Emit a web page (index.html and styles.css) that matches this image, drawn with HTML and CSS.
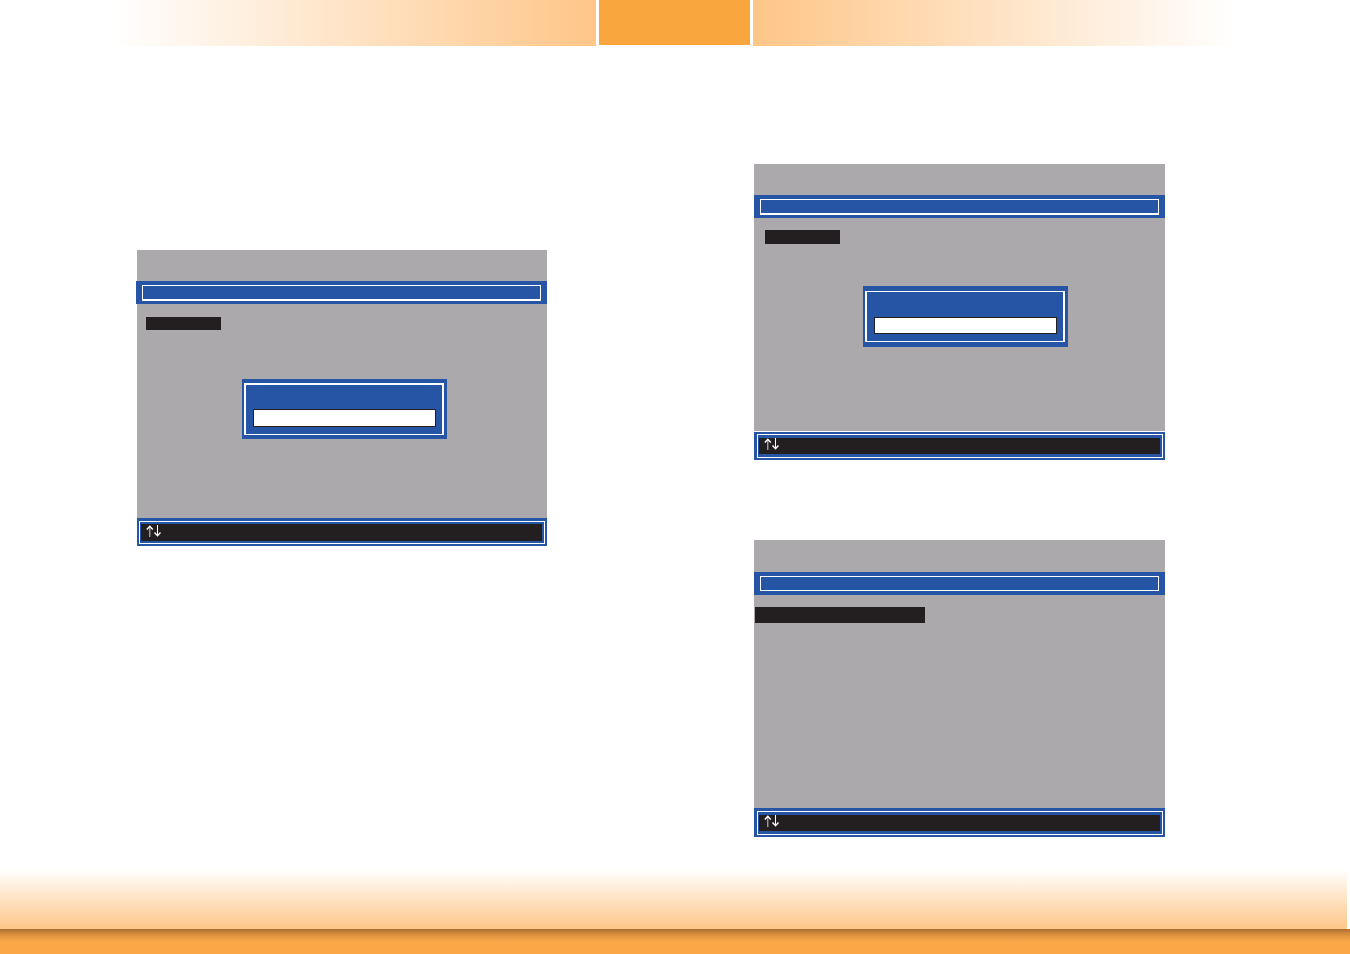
FILE: index.html
```html
<!DOCTYPE html>
<html lang="en">

<head>
  <meta charset="UTF-8">
  <meta name="viewport" content="width=device-width, initial-scale=1.0">
  <title>Setup</title>
  <link rel="stylesheet" href="styles.css">
</head>

<body>
  <header class="page-header">
    <div class="fade fade-left"></div>
    <div class="chapter-tab"></div>
    <div class="fade fade-right"></div>
  </header>

  <main class="content">
    <div class="column column-left">
      <section class="screen screen-wide-bar">
        <div class="screen-top"></div>
        <div class="title-bar">
          <div class="title-frame"></div>
        </div>
        <div class="screen-body">
          <div class="selected"></div>
          <div class="dialog">
            <div class="dialog-frame">
              <input class="dialog-input" type="text" aria-label="Value">
            </div>
          </div>
        </div>
        <div class="key-bar">
          <div class="key-frame">
            <div class="keys">
              <svg class="arrows" viewBox="0 0 15 12" role="img" aria-label="↑↓">
                <path class="shaft" d="M3.8 1V12" />
                <path d="M11.5 0V11" />
                <path class="head" d="M.8 4.5 3.8 1.2 6.8 4.5M8.5 7.5 11.5 10.8 14.5 7.5" />
              </svg>
            </div>
          </div>
        </div>
      </section>
    </div>

    <div class="column column-right">
      <section class="screen">
        <div class="screen-top"></div>
        <div class="title-bar">
          <div class="title-frame"></div>
        </div>
        <div class="screen-body body-ruled">
          <div class="selected selected-inset"></div>
          <div class="dialog dialog-right">
            <div class="dialog-frame">
              <input class="dialog-input" type="text" aria-label="Value">
            </div>
          </div>
        </div>
        <div class="key-bar">
          <div class="key-frame">
            <div class="keys">
              <svg class="arrows" viewBox="0 0 15 12" role="img" aria-label="↑↓">
                <path class="shaft" d="M3.8 1V12" />
                <path d="M11.5 0V11" />
                <path class="head" d="M.8 4.5 3.8 1.2 6.8 4.5M8.5 7.5 11.5 10.8 14.5 7.5" />
              </svg>
            </div>
          </div>
        </div>
      </section>

      <section class="screen">
        <div class="screen-top screen-top-tall"></div>
        <div class="title-bar">
          <div class="title-frame title-frame-thin"></div>
        </div>
        <div class="screen-body">
          <div class="selected selected-long"></div>
        </div>
        <div class="key-bar key-bar-tall">
          <div class="key-frame">
            <div class="keys">
              <svg class="arrows" viewBox="0 0 15 12" role="img" aria-label="↑↓">
                <path class="shaft" d="M3.8 1V12" />
                <path d="M11.5 0V11" />
                <path class="head" d="M.8 4.5 3.8 1.2 6.8 4.5M8.5 7.5 11.5 10.8 14.5 7.5" />
              </svg>
            </div>
          </div>
        </div>
      </section>
    </div>
  </main>

  <footer class="page-footer">
    <div class="footer-fade"></div>
    <div class="footer-bar"></div>
  </footer>
</body>

</html>
```
FILE: styles.css
```css
* {
  box-sizing: border-box;
}

body {
  font-family: "Liberation Serif", serif;
  background-color: #ffffff;
  margin: 0;
  min-height: 100vh;
  display: flex;
  flex-direction: column;
}

/* header */
.page-header {
  display: grid;
  grid-template-columns: 1fr 151px 1fr;
  gap: 3px;
  padding-right: 1px;
}

.fade {
  height: 46px;
}

.fade-left {
  background: linear-gradient(to left, #fec688, #ffffff 81%);
}

.fade-right {
  background: linear-gradient(to right, #fec688, #ffffff 81%);
}

.chapter-tab {
  height: 45px;
  background-color: #f9a63f;
}

/* screens */
.content {
  display: grid;
  grid-template-columns: 1fr 1fr;
  gap: 207px;
  padding: 0 185px 0 136px;
}

.column {
  display: flex;
  flex-direction: column;
  gap: 80px;
}

.column-left {
  padding-top: 204px;
}

.column-right {
  padding-top: 118px;
}

.screen-top {
  height: 31px;
  background-color: #aba9ab;
}

.screen-top-tall {
  height: 32px;
}

.title-bar {
  height: 23px;
  padding: 4px 6px 3px;
  background-color: #2655a5;
}

.title-frame {
  height: 16px;
  border: 1px solid #ffffff;
  border-bottom-width: 2px;
}

.title-frame-thin {
  height: 15px;
  border-bottom-width: 1px;
}

.screen-body {
  height: 213px;
  padding-top: 12px;
  background-color: #aba9ab;
}

.body-ruled {
  height: 214px;
  border-bottom: 1px solid #ffffff;
}

.selected {
  width: 75px;
  height: 14px;
  margin-left: 9px;
  background-color: #231f20;
}

.selected-inset {
  margin-left: 11px;
}

.selected-long {
  width: 170px;
  height: 16px;
  margin-left: 1px;
}

.key-bar {
  height: 28px;
  display: flex;
  padding: 2px;
  background-color: #2655a5;
}

.key-bar-tall {
  height: 29px;
  padding-top: 3px;
}

.key-frame {
  flex: 1;
  display: flex;
  margin-left: 1px;
  border: 1px solid #ffffff;
  padding: 3px 2px 3px 1px;
}

.keys {
  flex: 1;
  padding-left: 5px;
  background-color: #231f20;
}

.arrows {
  display: block;
  width: 15px;
  height: 12px;
  fill: none;
  stroke: #ffffff;
}

.arrows .shaft {
  stroke: #d0cfcf;
}

.arrows .head {
  stroke-width: 1.4;
}

/* the title bar sticks out one pixel to the left of this screen */
.screen-wide-bar .screen-top,
.screen-wide-bar .screen-body,
.screen-wide-bar .key-bar {
  margin-left: 1px;
}

.screen-wide-bar .screen-body {
  height: 214px;
  padding-top: 13px;
}

.screen-wide-bar .selected {
  height: 13px;
}

.screen-wide-bar .key-bar {
  padding-top: 3px;
}

.screen-wide-bar .key-frame {
  margin-left: 0;
  padding: 2px 2px 2px 1px;
}

.screen-wide-bar .keys {
  padding-top: 1px;
}

/* dialog */
.dialog {
  width: 205px;
  height: 60px;
  margin: 49px 0 0 105px;
  padding: 4px 3px 4px 2px;
  background-color: #2655a5;
}

.dialog-frame {
  height: 52px;
  padding: 24px 6px 0 7px;
  border: 2px solid #ffffff;
  border-bottom-width: 1px;
}

.dialog-input {
  display: block;
  width: 100%;
  height: 18px;
  padding: 0 4px;
  border: 1px solid #231f20;
  border-radius: 0;
  background-color: #ffffff;
  font-size: 13px;
}

.dialog-right {
  height: 61px;
  margin: 42px 0 0 109px;
  padding-top: 5px;
}

.dialog-right .dialog-frame {
  height: 51px;
  padding-top: 25px;
  border-top-width: 1px;
}

.dialog-right .dialog-input {
  height: 17px;
}

/* footer */
.page-footer {
  margin-top: auto;
}

.footer-fade {
  height: 60px;
  margin-right: 3px;
  background: linear-gradient(to bottom, #ffffff, #fec688);
}

.footer-bar {
  height: 25px;
  background: linear-gradient(to bottom, #ab6f31, #dd9240 6px, #faa748 13px);
}
```
